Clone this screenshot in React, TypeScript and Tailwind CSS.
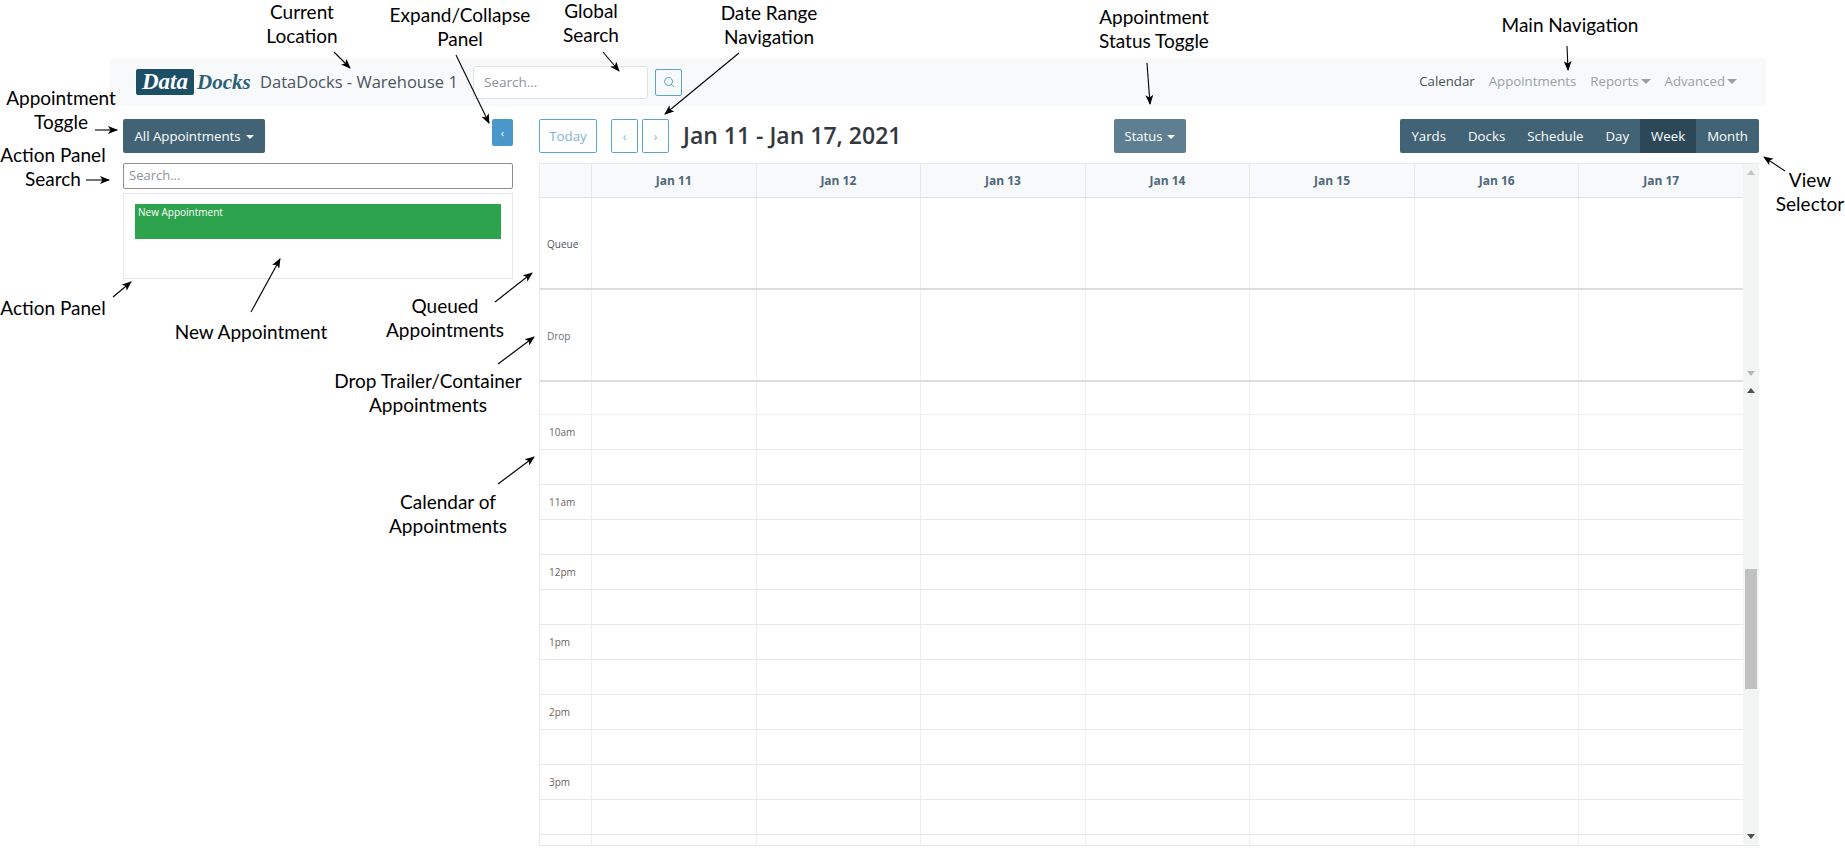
import { Search } from "lucide-react";

const DAYS = ["Jan 11", "Jan 12", "Jan 13", "Jan 14", "Jan 15", "Jan 16", "Jan 17"];

// Half-hour rows of the lower calendar; every other one carries an hour label
const TIME_ROWS = ["10am", "", "11am", "", "12pm", "", "1pm", "", "2pm", "", "3pm", "", ""];

const VIEWS = ["Yards", "Docks", "Schedule", "Day", "Week", "Month"];

// Callout arrows: x1, y1 is the tail, x2, y2 is the tip
const ARROWS = [
  [334, 52, 350, 68],
  [456, 55, 489, 123],
  [603, 52, 619, 71],
  [739, 53, 665, 114],
  [1147, 63, 1150, 104],
  [1567, 46, 1568, 70],
  [95, 130, 117, 130],
  [86, 180, 109, 180],
  [113, 297, 131, 282],
  [251, 312, 280, 259],
  [495, 302, 532, 273],
  [498, 364, 534, 337],
  [498, 484, 534, 457],
  [1785, 171, 1764, 157],
];

function Caret() {
  return (
    <span className="ml-[5px] inline-block h-0 w-0 border-x-[4px] border-t-[4px] border-x-transparent border-t-current align-[2px]" />
  );
}

function NavCaret() {
  return (
    <span className="ml-[2px] inline-block h-0 w-0 border-x-[5px] border-t-[5px] border-x-transparent border-t-current align-[2px]" />
  );
}

function Triangle({ down, className }: { down?: boolean; className: string }) {
  return (
    <svg viewBox="0 0 8 5" className={`h-[5px] w-[8px] ${className}`}>
      <polygon points={down ? "0,0 8,0 4,5" : "4,0 8,5 0,5"} fill="currentColor" />
    </svg>
  );
}

function Navbar() {
  return (
    <div className="ml-[110px] flex h-[48px] w-[1656px] items-center bg-[#f8f9fb] pl-[26px]">
      <div className="flex h-[26px] w-[58px] items-center justify-center rounded-[2px] bg-[#1c4f66] font-['Liberation_Serif',serif] text-[23px] font-bold italic text-white">
        Data
      </div>
      <div className="ml-[3px] w-[56px] font-['Liberation_Serif',serif] text-[21px] font-bold italic leading-none text-[#2a6176]">
        Docks
      </div>
      <div className="ml-[7px] w-[206px] whitespace-nowrap text-[16.5px] text-[#4b5560]">
        DataDocks - Warehouse 1
      </div>
      <div className="ml-[7px] flex h-[33px] w-[175px] items-center rounded-[3px] border border-[#dfe3e8] bg-white pl-[10px] text-[13.5px] text-[#8b949c]">
        Search...
      </div>
      <div className="ml-[7px] flex h-[27px] w-[27px] items-center justify-center rounded-[2px] border border-[#5ba4cf] text-[#5ba4cf]">
        <Search size={12} strokeWidth={2} />
      </div>
      <div className="ml-auto mr-[29px] flex items-center gap-[14px] text-[13.25px] text-[#9aa0a6]">
        <span className="text-[#4a4f55]">Calendar</span>
        <span>Appointments</span>
        <span>
          Reports
          <NavCaret />
        </span>
        <span>
          Advanced
          <NavCaret />
        </span>
      </div>
    </div>
  );
}

function ActionPanel() {
  return (
    <div className="ml-[123px] w-[390px] shrink-0">
      <div className="flex items-start justify-between">
        <div className="flex h-[34px] w-[142px] items-center justify-center rounded-[2px] bg-[#416375] pt-[1px] text-[13.25px] text-white">
          All Appointments
          <Caret />
        </div>
        <div className="flex h-[27px] w-[21px] items-center justify-center rounded-[2px] bg-[#4a98c9] text-[11px] leading-none text-white">
          ‹
        </div>
      </div>
      <div className="mt-[10px] flex h-[26px] items-center rounded-[2px] border border-[#8f8f8f] pl-[5px] text-[13px] text-[#8b949c]">
        Search...
      </div>
      <div className="mt-[4px] h-[86px] border border-[#e6e8eb] px-[11px] pt-[10px]">
        <div className="h-[35px] bg-[#2ea34d] pl-[3px] text-[10px] leading-[16px] text-white">
          New Appointment
        </div>
      </div>
    </div>
  );
}

function CalendarToolbar() {
  const outlineBtn =
    "flex h-[34px] items-center justify-center rounded-[2px] border border-[#5ba4cf] pt-[1px] text-[#7fb3d3]";
  return (
    <div className="flex h-[34px] items-center">
      <div className={`${outlineBtn} w-[58px] text-[13.25px]`}>Today</div>
      <div className={`${outlineBtn} ml-[14px] w-[27px] text-[12px]`}>‹</div>
      <div className={`${outlineBtn} ml-[4px] w-[27px] text-[12px]`}>›</div>
      <div className="ml-[14px] w-[431px] whitespace-nowrap pb-[1px] text-[23px] font-semibold text-[#33383d]">
        Jan 11 - Jan 17, 2021
      </div>
      <div className="flex h-[34px] w-[72px] items-center justify-center rounded-[2px] bg-[#5d7f91] pt-[1px] text-[13px] text-white">
        Status
        <Caret />
      </div>
      <div className="ml-auto flex h-[34px] overflow-hidden rounded-[2px] bg-[#416375] text-[13.25px] text-white">
        {VIEWS.map((view) => (
          <div
            key={view}
            className={`flex items-center px-[11px] pt-[1px] ${view === "Week" ? "bg-[#2c4858]" : ""}`}
          >
            {view}
          </div>
        ))}
      </div>
    </div>
  );
}

function LaneRow({ label, color }: { label: string; color: string }) {
  return (
    <div className="grid h-[92px] grid-cols-[51px_repeat(7,1fr)] border-b-[2px] border-[#dcdddf]">
      <div className={`flex items-center pl-[7px] pt-[2px] text-[10px] ${color}`}>{label}</div>
      {DAYS.map((day) => (
        <div key={day} className="border-l border-[#eceef1]" />
      ))}
    </div>
  );
}

function Calendar() {
  return (
    <div className="mt-[10px] flex h-[683px] flex-col border-b border-l border-t border-[#e6e8eb]">
      {/* Header and fixed lanes, with their own scrollbar */}
      <div className="flex h-[218px] shrink-0">
        <div className="flex-1">
          <div className="grid h-[34px] grid-cols-[51px_repeat(7,1fr)] border-b border-[#dfe4e8] bg-[#f8f9fb]">
            <div />
            {DAYS.map((day) => (
              <div
                key={day}
                className="flex items-center justify-center border-l border-[#e6e8eb] text-[12px] font-bold text-[#4f6879]"
              >
                {day}
              </div>
            ))}
          </div>
          <LaneRow label="Queue" color="text-[#4d5357]" />
          <LaneRow label="Drop" color="text-[#6a6f78]" />
        </div>
        <div className="flex w-[16px] flex-col items-center justify-between bg-[#f3f4f4] pb-[6px] pt-[6px]">
          <Triangle className="text-[#c2c4c6]" />
          <Triangle down className="text-[#b5b7b9]" />
        </div>
      </div>
      {/* Time grid */}
      <div className="flex min-h-0 flex-1">
        <div className="flex-1 overflow-hidden">
          <div className="grid h-[33px] grid-cols-[51px_repeat(7,1fr)] border-b border-[#eceef1]">
            <div />
            {DAYS.map((day) => (
              <div key={day} className="border-l border-[#eceef1]" />
            ))}
          </div>
          {TIME_ROWS.map((label, i) => (
            <div
              key={i}
              className="grid h-[35px] grid-cols-[51px_repeat(7,1fr)] border-b border-[#e8e9ed]"
            >
              <div className="flex items-center pl-[9px] text-[10px] text-[#6b6460]">{label}</div>
              {DAYS.map((day) => (
                <div key={day} className="border-l border-[#eceef1]" />
              ))}
            </div>
          ))}
        </div>
        <div className="flex w-[16px] flex-col items-center bg-[#f3f4f4] pb-[6px] pt-[6px]">
          <Triangle className="text-[#505050]" />
          <div className="mt-[176px] h-[120px] w-[12px] bg-[#c1c1c1]" />
          <Triangle down className="mt-auto text-[#505050]" />
        </div>
      </div>
    </div>
  );
}

function Callouts() {
  const label =
    "absolute -translate-x-1/2 whitespace-nowrap text-center font-['Lato',sans-serif] text-[19px] leading-[24px] text-black";
  return (
    <>
      <svg className="absolute left-0 top-0 h-[853px] w-[1845px]" viewBox="0 0 1845 853">
        <defs>
          <marker id="tip" markerWidth="10" markerHeight="8" refX="9" refY="4" orient="auto" markerUnits="userSpaceOnUse">
            <path d="M0 0 L10 4 L0 8 L2.5 4 Z" fill="#000" />
          </marker>
        </defs>
        {ARROWS.map(([x1, y1, x2, y2], i) => (
          <line key={i} x1={x1} y1={y1} x2={x2} y2={y2} stroke="#000" strokeWidth="1.1" markerEnd="url(#tip)" />
        ))}
      </svg>
      <div className={`${label} left-[302px] top-0`}>Current<br />Location</div>
      <div className={`${label} left-[460px] top-[3px]`}>Expand/Collapse<br />Panel</div>
      <div className={`${label} left-[591px] top-[-1px]`}>Global<br />Search</div>
      <div className={`${label} left-[769px] top-[1px]`}>Date Range<br />Navigation</div>
      <div className={`${label} left-[1154px] top-[5px]`}>Appointment<br />Status Toggle</div>
      <div className={`${label} left-[1570px] top-[13px]`}>Main Navigation</div>
      <div className={`${label} left-[61px] top-[86px]`}>Appointment<br />Toggle</div>
      <div className={`${label} left-[53px] top-[143px]`}>Action Panel<br />Search</div>
      <div className={`${label} left-[53px] top-[296px]`}>Action Panel</div>
      <div className={`${label} left-[251px] top-[320px]`}>New Appointment</div>
      <div className={`${label} left-[445px] top-[294px]`}>Queued<br />Appointments</div>
      <div className={`${label} left-[428px] top-[369px]`}>Drop Trailer/Container<br />Appointments</div>
      <div className={`${label} left-[448px] top-[490px]`}>Calendar of<br />Appointments</div>
      <div className={`${label} left-[1810px] top-[168px]`}>View<br />Selector</div>
    </>
  );
}

export default function App() {
  return (
    <div className="relative h-[853px] w-[1845px] overflow-hidden bg-white pt-[58px] font-['Open_Sans',sans-serif]">
      <Navbar />
      <div className="mt-[13px] flex">
        <ActionPanel />
        <div className="ml-[26px] w-[1220px] shrink-0">
          <CalendarToolbar />
          <Calendar />
        </div>
      </div>
      <Callouts />
    </div>
  );
}
